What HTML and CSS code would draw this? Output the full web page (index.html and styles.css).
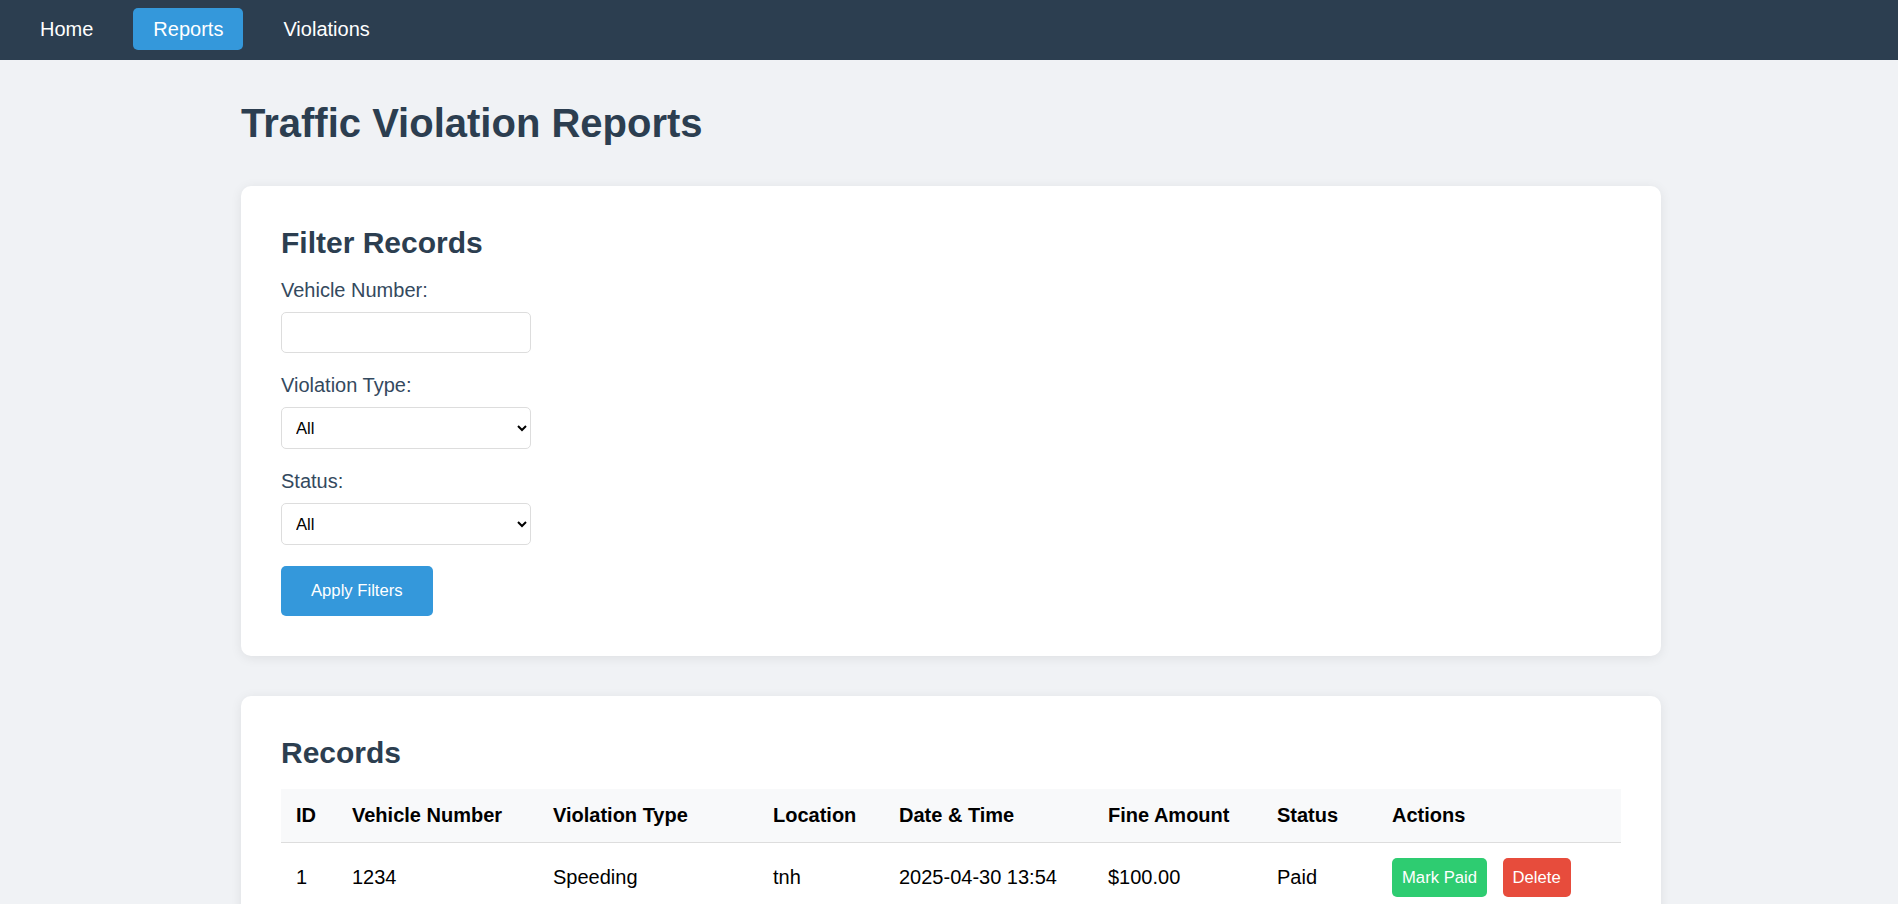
FILE: index.html
```html
<!DOCTYPE html>
<html lang="en">
<head>
<meta charset="utf-8">
<title>Traffic Violation Reports</title>
<link rel="stylesheet" href="styles.css">
</head>
<body>
<nav class="navbar">
  <a href="#" class="nav-link">Home</a>
  <a href="#" class="nav-link active">Reports</a>
  <a href="#" class="nav-link">Violations</a>
</nav>
<main class="container">
  <h1 class="page-title">Traffic Violation Reports</h1>
  <section class="card">
    <h2 class="card-title">Filter Records</h2>
    <div class="form-group">
      <label class="form-label" for="vehicle">Vehicle Number:</label>
      <input class="form-control form-input" type="text" id="vehicle">
    </div>
    <div class="form-group">
      <label class="form-label" for="vtype">Violation Type:</label>
      <select class="form-control" id="vtype">
        <option>All</option>
        <option>Speeding</option>
        <option>Red Light</option>
        <option>Parking</option>
      </select>
    </div>
    <div class="form-group">
      <label class="form-label" for="status">Status:</label>
      <select class="form-control" id="status">
        <option>All</option>
        <option>Paid</option>
        <option>Unpaid</option>
      </select>
    </div>
    <button class="btn btn-primary">Apply Filters</button>
  </section>
  <section class="card">
    <h2 class="card-title">Records</h2>
    <table class="records-table">
      <colgroup>
        <col class="c-id"><col class="c-veh"><col class="c-type"><col class="c-loc"><col class="c-date"><col class="c-fine"><col class="c-status"><col class="c-actions">
      </colgroup>
      <thead>
        <tr>
          <th>ID</th><th>Vehicle Number</th><th>Violation Type</th><th>Location</th><th>Date &amp; Time</th><th>Fine Amount</th><th>Status</th><th>Actions</th>
        </tr>
      </thead>
      <tbody>
        <tr>
          <td>1</td><td>1234</td><td>Speeding</td><td>tnh</td><td>2025-04-30 13:54</td><td>$100.00</td><td>Paid</td>
          <td><button class="btn-sm btn-success">Mark Paid</button> <button class="btn-sm btn-danger">Delete</button></td>
        </tr>
      </tbody>
    </table>
  </section>
</main>
</body>
</html>
```

FILE: styles.css
```css
* { box-sizing: border-box; }

body {
  margin: 0;
  background: #f0f2f5;
  font-family: "Liberation Sans", Arial, sans-serif;
  font-size: 20px;
}

.navbar {
  background: #2c3e50;
  height: 60px;
  display: flex;
  align-items: flex-start;
  padding: 8px 10px 0;
}

.nav-link {
  color: #fff;
  text-decoration: none;
  font-size: 20px;
  line-height: 22px;
  padding: 10px 20px;
  margin: 0 10px;
  border-radius: 5px;
}

.nav-link.active { background: #3498db; }

.container {
  max-width: 1500px;
  margin: 0 auto;
  padding: 40px 38px 0 42px;
}

.page-title {
  color: #2c3e50;
  font-size: 40px;
  margin: 0 0 40px;
  line-height: 46px;
}

.card {
  background: #fff;
  border-radius: 10px;
  padding: 40px;
  margin-bottom: 40px;
  box-shadow: 0 2px 12px rgba(0, 0, 0, 0.08);
}

.card-title {
  color: #2c3e50;
  font-size: 30px;
  line-height: 34px;
  margin: 0 0 19px;
}

.form-group { margin-bottom: 20.5px; }

.form-label {
  display: block;
  color: #34495e;
  font-size: 20px;
  line-height: 23px;
  margin-bottom: 10px;
}

.form-control {
  display: block;
  width: 250px;
  height: 42.5px;
  padding: 0 10px;
  border: 1px solid #ddd;
  border-radius: 5px;
  background: #fff;
  font-family: "Liberation Sans", Arial, sans-serif;
  font-size: 16.67px;
  color: #000;
}

.form-input { height: 41.25px; }

.btn {
  border: none;
  border-radius: 5px;
  font-family: "Liberation Sans", Arial, sans-serif;
  font-size: 16.67px;
  cursor: pointer;
}

.btn-primary {
  background: #3498db;
  color: #fff;
  height: 50px;
  padding: 0 30px;
}

.records-table {
  width: 100%;
  border-collapse: collapse;
  table-layout: fixed;
}

.c-id { width: 56px; }
.c-veh { width: 201px; }
.c-type { width: 220px; }
.c-loc { width: 126px; }
.c-date { width: 209px; }
.c-fine { width: 169px; }
.c-status { width: 115px; }
.c-actions { width: 244px; }

.records-table th,
.records-table td {
  text-align: left;
  padding: 15px;
  border-bottom: 1px solid #ddd;
  font-size: 20px;
  line-height: 23px;
  color: #000;
  white-space: nowrap;
}

.records-table th {
  background: #f8f9fa;
  font-weight: bold;
}

.btn-sm {
  border: none;
  border-radius: 5px;
  color: #fff;
  font-family: "Liberation Sans", Arial, sans-serif;
  font-size: 16.67px;
  line-height: 19px;
  padding: 10px;
  margin-right: 10px;
  vertical-align: middle;
}

.btn-success { background: #2ecc71; }
.btn-danger { background: #e74c3c; }
```
